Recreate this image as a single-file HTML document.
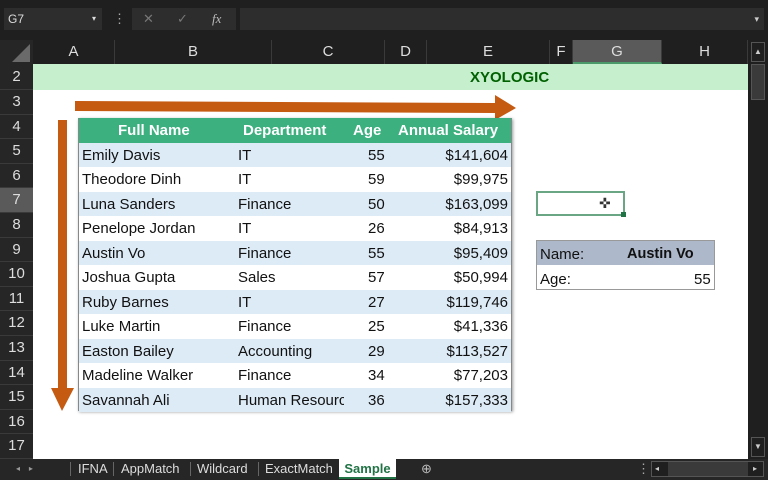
<!DOCTYPE html>
<html><head><style>
*{margin:0;padding:0;box-sizing:border-box}
body{width:768px;height:480px;background:#1f1f1f;position:relative;overflow:hidden;font-family:"Liberation Sans",sans-serif}
.a{position:absolute}
.t{font-size:15px;color:#111;white-space:nowrap}
.ch{color:#ddd;font-size:15px;text-align:center;line-height:24px;top:40px;height:24px;border-right:1px solid #3a3a3a}
.rh{color:#ddd;font-size:15px;text-align:center;left:0;width:33px;border-bottom:1px solid #3a3a3a}
.row{left:79px;width:432px;height:24.5px;font-size:15px;line-height:26px;color:#111}
.row span{position:absolute;white-space:nowrap}
</style></head><body>
<div class="a" style="left:0;top:0;width:768px;height:40px;background:#1f1f1f"></div>
<div class="a" style="left:4px;top:8px;width:98px;height:22px;background:#2d2d2d;color:#ddd;font-size:12px;line-height:22px;padding-left:4px">G7<span style="position:absolute;right:6px;font-size:8px">▾</span></div>
<div class="a" style="left:113px;top:8px;color:#aaa;font-size:13px;line-height:22px">⋮</div>
<div class="a" style="left:132px;top:8px;width:104px;height:22px;background:#2d2d2d;color:#777;font-size:13px;line-height:22px"><span style="position:absolute;left:11px">✕</span><span style="position:absolute;left:45px">✓</span><span style="position:absolute;left:80px;color:#bbb;font-style:italic;font-family:'Liberation Serif',serif">fx</span></div>
<div class="a" style="left:240px;top:8px;width:524px;height:22px;background:#2d2d2d"><span style="position:absolute;right:5px;color:#ccc;font-size:9px;line-height:22px">▾</span></div>
<div class="a" style="left:0;top:40px;width:33px;height:24px;background:#262626"></div>
<div class="a" style="left:12px;top:44px;width:0;height:0;border-left:18px solid transparent;border-bottom:18px solid #6a6a6a"></div>
<div class="a ch" style="left:33px;width:82px">A</div>
<div class="a ch" style="left:115px;width:157px">B</div>
<div class="a ch" style="left:272px;width:113px">C</div>
<div class="a ch" style="left:385px;width:42px">D</div>
<div class="a ch" style="left:427px;width:123px">E</div>
<div class="a ch" style="left:550px;width:23px">F</div>
<div class="a ch" style="left:573px;width:89px;background:#5a5a5a;border-bottom:2px solid #4a9a6a">G</div>
<div class="a ch" style="left:662px;width:86px">H</div>
<div class="a" style="left:748px;top:40px;width:20px;height:419px;background:#1f1f1f"></div>
<div class="a" style="left:751px;top:42px;width:14px;height:20px;border:1px solid #555;color:#ccc;font-size:8px;text-align:center;line-height:18px">▲</div>
<div class="a" style="left:751px;top:64px;width:14px;height:36px;background:#3a3a3a;border:1px solid #555"></div>
<div class="a" style="left:751px;top:437px;width:14px;height:20px;border:1px solid #555;color:#ccc;font-size:8px;text-align:center;line-height:18px">▼</div>
<div class="a" style="left:33px;top:64px;width:715px;height:395px;background:#fff"></div>
<div class="a" style="left:33px;top:64px;width:715px;height:26px;background:#c6efce"></div>
<div class="a" style="left:470px;top:65px;color:#006100;font-weight:bold;font-size:15px;line-height:26px">XYOLOGIC</div>
<div class="a" style="left:0;top:64px;width:33px;height:395px;background:#262626"></div>
<div class="a rh" style="top:64px;height:26px;line-height:26px">2</div>
<div class="a rh" style="top:90px;height:24.6px;line-height:24.6px">3</div>
<div class="a rh" style="top:114.6px;height:24.6px;line-height:24.6px">4</div>
<div class="a rh" style="top:139.2px;height:24.6px;line-height:24.6px">5</div>
<div class="a rh" style="top:163.8px;height:24.6px;line-height:24.6px">6</div>
<div class="a rh" style="top:188.4px;height:24.6px;line-height:24.6px;background:#5a5a5a">7</div>
<div class="a rh" style="top:213px;height:24.6px;line-height:24.6px">8</div>
<div class="a rh" style="top:237.6px;height:24.6px;line-height:24.6px">9</div>
<div class="a rh" style="top:262.2px;height:24.6px;line-height:24.6px">10</div>
<div class="a rh" style="top:286.8px;height:24.6px;line-height:24.6px">11</div>
<div class="a rh" style="top:311.4px;height:24.6px;line-height:24.6px">12</div>
<div class="a rh" style="top:336px;height:24.6px;line-height:24.6px">13</div>
<div class="a rh" style="top:360.6px;height:24.6px;line-height:24.6px">14</div>
<div class="a rh" style="top:385.2px;height:24.6px;line-height:24.6px">15</div>
<div class="a rh" style="top:409.8px;height:24.6px;line-height:24.6px">16</div>
<div class="a rh" style="top:434.4px;height:24.6px;line-height:24.6px">17</div>
<svg class="a" style="left:0;top:0" width="768" height="480">
<polygon points="75,101 495,103 495,95 516,108 495,120 495,113 75,111" fill="#c55a11"/>
<rect x="58" y="120" width="9" height="270" fill="#c55a11"/>
<polygon points="51,388 74,388 62,411" fill="#c55a11"/>
</svg>
<div class="a" style="left:78px;top:118px;width:434px;height:293px;box-shadow:1px 1px 3px rgba(0,0,0,.4);border:1px solid #888;background:#fff"></div>
<div class="a row" style="top:118px;background:#3cb07f;color:#fff;font-weight:bold"><span style="left:39px">Full Name</span><span style="left:164px">Department</span><span style="left:274px">Age</span><span style="left:319px">Annual Salary</span></div>
<div class="a row" style="top:142.5px;background:#ddebf7"><span style="left:3px">Emily Davis</span><span style="left:159px">IT</span><span style="left:289px">55</span><span style="right:3px">$141,604</span></div>
<div class="a row" style="top:167px"><span style="left:3px">Theodore Dinh</span><span style="left:159px">IT</span><span style="left:289px">59</span><span style="right:3px">$99,975</span></div>
<div class="a row" style="top:191.5px;background:#ddebf7"><span style="left:3px">Luna Sanders</span><span style="left:159px">Finance</span><span style="left:289px">50</span><span style="right:3px">$163,099</span></div>
<div class="a row" style="top:216px"><span style="left:3px">Penelope Jordan</span><span style="left:159px">IT</span><span style="left:289px">26</span><span style="right:3px">$84,913</span></div>
<div class="a row" style="top:240.5px;background:#ddebf7"><span style="left:3px">Austin Vo</span><span style="left:159px">Finance</span><span style="left:289px">55</span><span style="right:3px">$95,409</span></div>
<div class="a row" style="top:265px"><span style="left:3px">Joshua Gupta</span><span style="left:159px">Sales</span><span style="left:289px">57</span><span style="right:3px">$50,994</span></div>
<div class="a row" style="top:289.5px;background:#ddebf7"><span style="left:3px">Ruby Barnes</span><span style="left:159px">IT</span><span style="left:289px">27</span><span style="right:3px">$119,746</span></div>
<div class="a row" style="top:314px"><span style="left:3px">Luke Martin</span><span style="left:159px">Finance</span><span style="left:289px">25</span><span style="right:3px">$41,336</span></div>
<div class="a row" style="top:338.5px;background:#ddebf7"><span style="left:3px">Easton Bailey</span><span style="left:159px">Accounting</span><span style="left:289px">29</span><span style="right:3px">$113,527</span></div>
<div class="a row" style="top:363px"><span style="left:3px">Madeline Walker</span><span style="left:159px">Finance</span><span style="left:289px">34</span><span style="right:3px">$77,203</span></div>
<div class="a row" style="top:387.5px;background:#ddebf7;overflow:hidden"><span style="left:3px">Savannah Ali</span><span style="left:159px;width:106px;overflow:hidden">Human Resources</span><span style="left:289px">36</span><span style="right:3px">$157,333</span></div>
<div class="a" style="left:536px;top:191px;width:89px;height:25px;border:2px solid #6aa684"></div>
<div class="a" style="left:621px;top:212px;width:5px;height:5px;background:#217346"></div>
<div class="a" style="left:599px;top:195px;color:#333;font-size:14px">✜</div>
<div class="a" style="left:536px;top:240px;width:179px;height:50px;border:1px solid #999;background:#fff"></div>
<div class="a" style="left:537px;top:241px;width:177px;height:24px;background:#adb9ca"></div>
<div class="a t" style="left:540px;top:246px">Name:</div>
<div class="a t" style="left:627px;top:246px;font-weight:bold;font-size:14.5px">Austin Vo</div>
<div class="a t" style="left:540px;top:271px">Age:</div>
<div class="a t" style="left:694px;top:271px">55</div>
<div class="a" style="left:0;top:459px;width:768px;height:21px;background:#262626;color:#ddd;font-size:13px;line-height:20px">
<span class="a" style="left:16px;font-size:8px;color:#999">◂ &nbsp;&nbsp; ▸</span>
<span class="a" style="left:70px;top:3px;height:14px;border-left:1px solid #666"></span>
<span class="a" style="left:78px">IFNA</span>
<span class="a" style="left:113px;top:3px;height:14px;border-left:1px solid #666"></span>
<span class="a" style="left:121px">AppMatch</span>
<span class="a" style="left:190px;top:3px;height:14px;border-left:1px solid #666"></span>
<span class="a" style="left:197px">Wildcard</span>
<span class="a" style="left:258px;top:3px;height:14px;border-left:1px solid #666"></span>
<span class="a" style="left:265px">ExactMatch</span>
<span class="a" style="left:339px;top:0;width:57px;height:20px;background:#fff;color:#217346;font-weight:bold;text-align:center;border-bottom:2px solid #217346">Sample</span>
<span class="a" style="left:421px;color:#bbb">⊕</span>
<span class="a" style="left:637px;color:#aaa">⋮</span>
<span class="a" style="left:651px;top:2px;width:113px;height:16px;border:1px solid #555;background:#1f1f1f"></span>
<span class="a" style="left:668px;top:3px;width:80px;height:14px;background:#3a3a3a"></span>
<span class="a" style="left:655px;font-size:8px;color:#ccc">◂</span>
<span class="a" style="left:753px;font-size:8px;color:#ccc">▸</span>
</div>
</body></html>
